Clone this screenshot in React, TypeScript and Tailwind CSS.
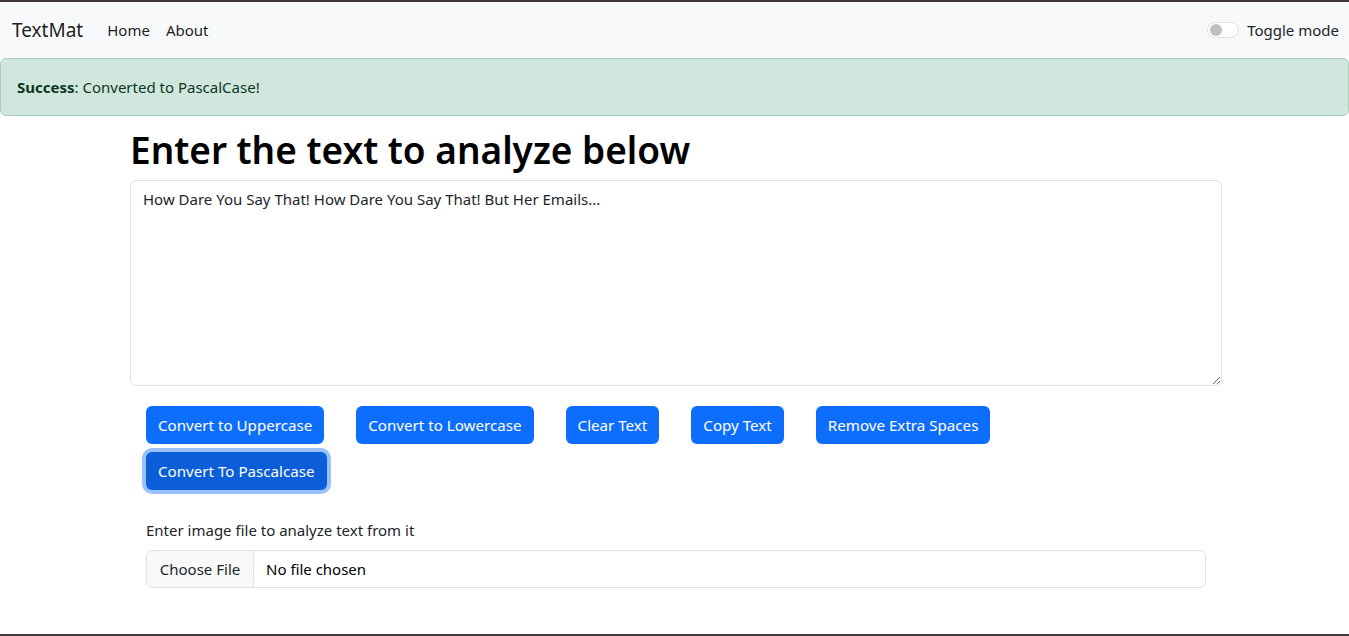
import React from "react";

export default function App() {
  const font = { fontFamily: '"Noto Sans", "Open Sans", sans-serif' };
  return (
    <div
      style={font}
      className="h-[636px] flex flex-col bg-white border-t-2 border-b-2 border-[#3d393d] text-[#212529] overflow-hidden"
    >
      {/* Navbar */}
      <nav className="h-[56px] shrink-0 bg-[#f8f9fa] flex items-center px-3">
        <span className="text-[19px] text-black/90 mr-4 leading-[30px]">TextMat</span>
        <a className="px-2 text-[15px] text-black/90">Home</a>
        <a className="px-2 text-[15px] text-black/90">About</a>
        <div className="ml-auto flex items-center mr-[-2px]">
          <span className="relative w-[32px] h-[16px] rounded-full border border-[#dee2e6] bg-white mr-2">
            <span className="absolute left-[2px] top-[1px] w-[12px] h-[12px] rounded-full bg-[#bfbfbf]" />
          </span>
          <span className="text-[15px] text-[#212529]">Toggle mode</span>
        </div>
      </nav>

      {/* Alert */}
      <div className="h-[58px] shrink-0 flex items-center px-4 bg-[#d1e7dd] border border-[#a3cfbb] rounded-md text-[#0a3622] text-[15px]">
        <span>
          <strong className="font-bold">Success</strong>: Converted to PascalCase!
        </span>
      </div>

      {/* Main */}
      <div className="ml-[130px] w-[1092px]">
        <h1 className="mt-[10px] mb-[6px] text-[37px] leading-[48px] font-semibold text-black">
          Enter the text to analyze below
        </h1>
        <textarea
          style={font}
          className="block w-full h-[206px] border border-[#dee2e6] rounded-md px-3 py-1.5 text-[15px] leading-6 text-[#212529] outline-none"
          defaultValue="How Dare You Say That! How Dare You Say That! But Her Emails..."
        />
        <div className="mt-4 flex">
          {["Convert to Uppercase", "Convert to Lowercase", "Clear Text", "Copy Text", "Remove Extra Spaces"].map(
            (t) => (
              <button
                key={t}
                className="mx-4 my-1 h-[38px] px-3 rounded-md bg-[#0d6efd] text-white text-[15.15px]"
              >
                {t}
              </button>
            )
          )}
        </div>
        <div className="flex">
          <button className="mx-4 my-1 h-[38px] px-3 rounded-md bg-[#0b5ed7] text-white text-[15.15px] shadow-[0_0_0_4px_rgba(49,132,253,0.5)]">
            Convert To Pascalcase
          </button>
        </div>
        <div className="mx-4 mt-6 mb-2 text-[15px] leading-6">Enter image file to analyze text from it</div>
        <div className="mx-4 h-[38px] flex border border-[#dee2e6] rounded-md overflow-hidden text-[15px]">
          <span className="w-[107px] flex items-center justify-center bg-[#f8f9fa] border-r border-[#dee2e6] text-[#212529]">
            Choose File
          </span>
          <span className="flex items-center pl-3 text-black">No file chosen</span>
        </div>
      </div>
    </div>
  );
}
